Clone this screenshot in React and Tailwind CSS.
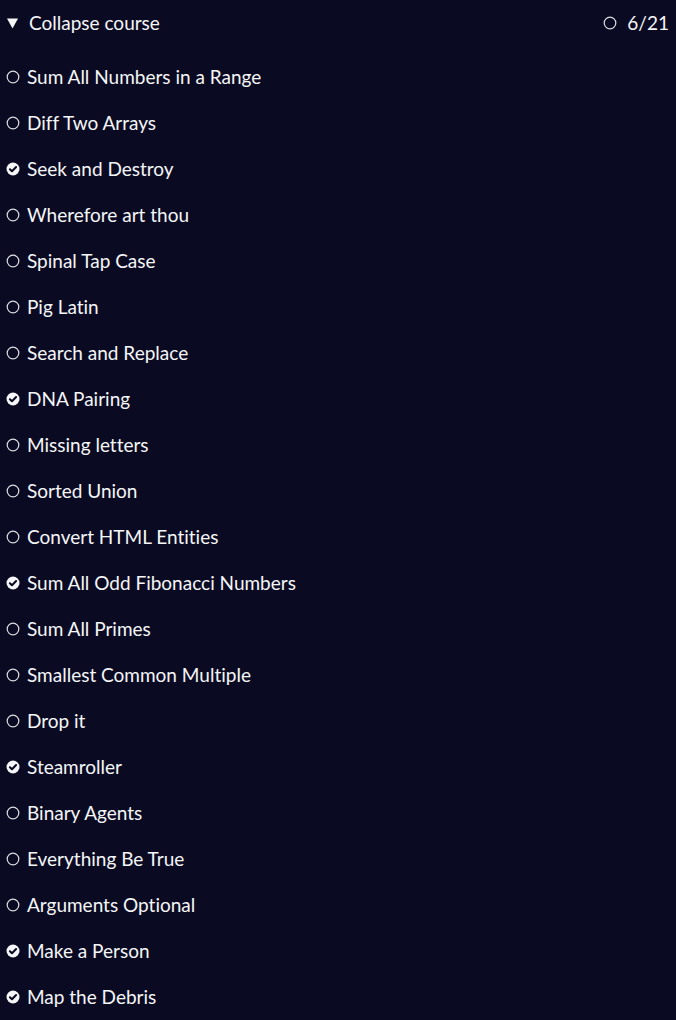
const challenges = [
  { title: 'Sum All Numbers in a Range', done: false },
  { title: 'Diff Two Arrays', done: false },
  { title: 'Seek and Destroy', done: true },
  { title: 'Wherefore art thou', done: false },
  { title: 'Spinal Tap Case', done: false },
  { title: 'Pig Latin', done: false },
  { title: 'Search and Replace', done: false },
  { title: 'DNA Pairing', done: true },
  { title: 'Missing letters', done: false },
  { title: 'Sorted Union', done: false },
  { title: 'Convert HTML Entities', done: false },
  { title: 'Sum All Odd Fibonacci Numbers', done: true },
  { title: 'Sum All Primes', done: false },
  { title: 'Smallest Common Multiple', done: false },
  { title: 'Drop it', done: false },
  { title: 'Steamroller', done: true },
  { title: 'Binary Agents', done: false },
  { title: 'Everything Be True', done: false },
  { title: 'Arguments Optional', done: false },
  { title: 'Make a Person', done: true },
  { title: 'Map the Debris', done: true },
];

const EmptyCircle = () => (
  <svg width="14" height="14" viewBox="0 0 14 14" className="shrink-0">
    <circle cx="7" cy="7" r="5.8" fill="none" stroke="#dfdfe2" strokeWidth="1.2" />
  </svg>
);

const CheckCircle = () => (
  <svg width="14" height="14" viewBox="0 0 14 14" className="shrink-0">
    <circle cx="7" cy="7" r="6.5" fill="#f5f6f7" />
    <path d="M3.9 7.2 L6 9.3 L10.1 5" fill="none" stroke="#0a0a23" strokeWidth="2" strokeLinecap="round" strokeLinejoin="round" />
  </svg>
);

export default function App() {
  return (
    <div className="min-h-screen w-full bg-[#0a0a23] text-[#f5f6f7] font-['Lato','Open_Sans',sans-serif] text-[19px] [font-variant-ligatures:none]">
      {/* Header */}
      <div className="flex items-center justify-between h-[46px] pl-[7px] pr-[7px]">
        <div className="flex items-center gap-[11px]">
          <svg width="11" height="11" viewBox="0 0 11 11" className="shrink-0">
            <path d="M0 0.5 H11 L5.5 10.5 Z" fill="#f5f6f7" />
          </svg>
          <span>Collapse course</span>
        </div>
        <div className="flex items-center gap-[10px]">
          <EmptyCircle />
          <span>6/21</span>
        </div>
      </div>

      {/* Challenges */}
      <ul className="pt-[8px]">
        {challenges.map((c) => (
          <li key={c.title} className="flex items-center gap-[7px] h-[46px] pl-[6px]">
            {c.done ? <CheckCircle /> : <EmptyCircle />}
            <span>{c.title}</span>
          </li>
        ))}
      </ul>
    </div>
  );
}
